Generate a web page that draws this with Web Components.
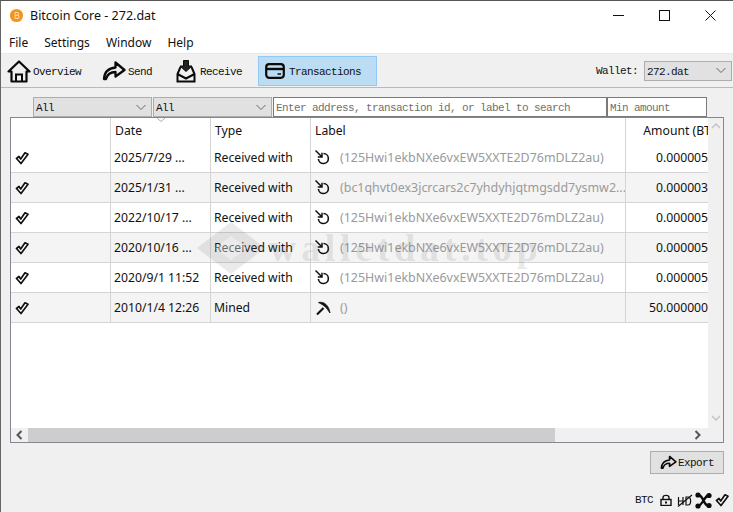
<!DOCTYPE html>
<html lang="en"><head><meta charset="utf-8"><title>Bitcoin Core - 272.dat</title>
<style>html,body{margin:0;padding:0;overflow:hidden;background:#f0f0f0}</style></head>
<body>
<app-window></app-window>
<script>
const ICONS={
 logo:[16,'<circle cx="8" cy="8" r="7" fill="#f7931a"/><path d="M6.5 4.5V11.5M6.5 4.8H9C10.6 4.8 10.6 7.8 9 7.8H6.5M6.5 7.9H9.4C11 7.9 11 11.1 9.4 11.1H6.5" fill="none" stroke="#fbd9a8" stroke-width="1.2"/>'],
 home:[24,'<path d="M1.5 12.5 12 2.5 22.5 12.5 19.5 12.5V22.5H4.5V12.5Z" fill="none" stroke="#0b0b0b" stroke-width="2.2" stroke-linejoin="round"/><path d="M9 22V15.5H15V22" fill="none" stroke="#0b0b0b" stroke-width="2"/>'],
 send:[24,'<path d="M2 20C2.5 12.5 7.5 9 13.5 8.5V3.5L22.5 11 13.5 17.5V13C9 13 5.5 14.5 4 20Z" fill="none" stroke="#0b0b0b" stroke-width="2.3" stroke-linejoin="round"/>'],
 recv:[24,'<path d="M9.5 1.5H14.5V7H18L12 12.5 6 7H9.5Z" fill="#222" stroke="#0b0b0b" stroke-width="1"/><path d="M6.5 8 3.5 15V22.5H20.5V15L17.5 8M3.5 15 12 19.5 20.5 15" fill="none" stroke="#0b0b0b" stroke-width="2"/>'],
 card:[20,'<rect x="1.2" y="3.2" width="17.6" height="13.6" rx="3" fill="none" stroke="#0b0b0b" stroke-width="2.2"/><path d="M1.5 8H18.5" stroke="#0b0b0b" stroke-width="2.4"/><path d="M12.5 13H16" stroke="#0b0b0b" stroke-width="1.5"/>'],
 check:[14,'<path d="M1.5 7.5 4 5.5 5.7 8 10 1.8 13 3.2 6 12.5Z" fill="#fff" stroke="#111" stroke-width="1.7" stroke-linejoin="round"/>'],
 tx:[16,'<path d="M.5 .5 7 7M2.8 7H7V2.8" fill="none" stroke="#111" stroke-width="1.5"/><path d="M8.5 3.5A5 5 0 1 1 3.4 9" fill="none" stroke="#111" stroke-width="1.6"/>'],
 pick:[16,'<path d="M2 14.5 8.5 8" stroke="#111" stroke-width="2.2"/><path d="M3.5 2.5C9 1 14 5.5 15 13L11.5 8 8 5Z" fill="#111" stroke="#111" stroke-width=".8"/>'],
 lock:[12,'<rect x="1" y="5.5" width="10" height="6" fill="none" stroke="#111" stroke-width="1.4"/><path d="M3 5.5V3.5C3 .7 9 .7 9 3.5V5.5" fill="none" stroke="#111" stroke-width="1.4"/><rect x="5" y="7.5" width="2" height="2" fill="#111"/>'],
 nohd:[16,'<path d="M1.5 5V13M6 5V13M1.5 9H6" stroke="#111" stroke-width="1.2" fill="none"/><path d="M9 5V13H11C14.5 13 14.5 5 11 5Z" stroke="#111" stroke-width="1.2" fill="none"/><path d="M1 14.5 15 3" stroke="#111" stroke-width="1.2"/>'],
 net:[17,'<path d="M3 3C9 3 8 14 14 14M3 14C8 13 9 4 14 3" fill="none" stroke="#0b0b0b" stroke-width="2.4"/><circle cx="3" cy="3" r="2.6" fill="#0b0b0b"/><circle cx="3" cy="14" r="2.6" fill="#0b0b0b"/><circle cx="14" cy="3.5" r="2.6" fill="#0b0b0b"/><circle cx="14" cy="13.5" r="2.6" fill="#0b0b0b"/>']
};
function def(name,css,html){
 customElements.define(name,class extends HTMLElement{
  constructor(){super();this.attachShadow({mode:'open'})}
  connectedCallback(){this.shadowRoot.innerHTML='<style>'+css+'</style>'+(typeof html==='function'?html(this):html)}
 });
}
const MONO='font:11px/14px "Liberation Mono",monospace;letter-spacing:-.6px;';
const CHEV='<svg style="flex:none" width="12" height="7" viewBox="0 0 12 7"><path d="M1.5 1 6 5.5 10.5 1" fill="none" stroke="#666" stroke-width="1"/></svg>';
def('ui-icon',':host{display:inline-flex;flex:none}svg{display:block}',h=>{
 const [v,body]=ICONS[h.getAttribute('name')];const s=h.getAttribute('size')||v;
 return `<svg width="${s}" height="${s}" viewBox="0 0 ${v} ${v}">${body}</svg>`});
def('title-bar',`:host{display:flex;align-items:center;height:29px;background:#fff;color:#111;font:12.5px "Noto Sans",sans-serif}
 .t{flex:1;padding-left:6px}ui-icon{margin-left:8px}
 .b{width:46px;height:29px;display:flex;align-items:center;justify-content:center}`,
 `<ui-icon name="logo" size="15"></ui-icon><div class="t">Bitcoin Core - 272.dat</div>
 <div class="b"><svg width="11" height="11"><path d="M0 5.5H11" stroke="#111"/></svg></div>
 <div class="b"><svg width="11" height="11"><rect x=".5" y=".5" width="10" height="10" fill="none" stroke="#111"/></svg></div>
 <div class="b"><svg width="11" height="11"><path d="M.5 .5 10.5 10.5M10.5 .5 .5 10.5" stroke="#111" fill="none"/></svg></div>`);
def('menu-bar',`:host{display:flex;height:23px;background:#fff;border-bottom:1px solid #e9e9e9;color:#111;font:12px/25px "Noto Sans",sans-serif;padding-left:8px;gap:16px}`,
 '<span>File</span><span>Settings</span><span>Window</span><span>Help</span>');
def('tool-button',`:host{display:flex;align-items:center;box-sizing:border-box;height:30px;gap:2px;color:#111;${MONO}}
 .x{display:block;padding-top:2px}
 :host([active]){background:#bcdcf4;border:1px solid #90c8f6;padding:1px 0 0 6px;gap:4px}`,
 h=>`<ui-icon name="${h.getAttribute('icon')}" size="${h.getAttribute('size')||24}"></ui-icon><span class="x"><slot></slot></span>`);
def('ui-combo',`:host{display:flex;align-items:center;box-sizing:border-box;height:20px;background:#e1e1e1;border:1px solid #adadad;padding:0 4px 0 2px;justify-content:space-between;color:#111;${MONO}}
 .x{display:block;padding-top:2px}`,
 '<span class="x"><slot></slot></span>'+CHEV);
def('ui-input',`:host{display:flex;align-items:center;box-sizing:border-box;height:20px;background:#fff;border:1px solid #7a7a7a;padding:2px 0 0 2px;color:#6f6f6f;white-space:nowrap;overflow:hidden;${MONO}}`,'<slot></slot>');
def('tool-bar',`:host{display:flex;align-items:center;height:33px;background:#f0f0f0;border-bottom:1px solid #b9b9b9;padding-left:6px;${MONO}}
 .w{margin-left:auto;display:flex;align-items:center;gap:6px;padding-right:1px;color:#111}
 tool-button:nth-of-type(1){width:95px}tool-button:nth-of-type(2){width:72px}tool-button:nth-of-type(3){width:84px}
 tool-button:nth-of-type(4){width:119px}
 ui-combo{width:88px}`,
 `<tool-button icon="home">Overview</tool-button><tool-button icon="send">Send</tool-button><tool-button icon="recv">Receive</tool-button>
 <tool-button icon="card" size="20" active>Transactions</tool-button>
 <div class="w">Wallet: <ui-combo>272.dat</ui-combo></div>`);
def('filter-bar',`:host{display:flex;padding:9px 0 0 32px;gap:1px}ui-combo{width:119px}`,
 `<ui-combo>All</ui-combo><ui-combo>All</ui-combo><ui-input style="width:334px;margin-right:-1px">Enter address, transaction id, or label to search</ui-input><ui-input style="width:100px">Min amount</ui-input>`);
const GRID='display:grid;grid-template-columns:100px 100px 100px 315px 100px;width:715px;';
def('tx-row',`:host{${GRID}height:30px;box-sizing:border-box;border-bottom:1px solid #d4d4d4;color:#111;font:12.2px/28px "Noto Sans",sans-serif}
 :host([alt]){background:#f4f4f4}
 .c{border-right:1px solid #d4d4d4;padding-left:3px;white-space:nowrap;overflow:hidden;display:flex;align-items:center}
 .s{padding-left:4px}.l{padding-left:4px;gap:9px;color:#9a9a9a;font-size:12.45px}
 .a{border:0;justify-content:flex-end;padding-right:4px}`,
 h=>{const g=a=>h.getAttribute(a);return `<div class="c s"><ui-icon name="check" size="14"></ui-icon></div><div class="c">${g('date')}</div><div class="c">${g('type')}</div><div class="c l"><ui-icon name="${g('icon')||'tx'}" size="16"></ui-icon><span>${g('label')}</span></div><div class="c a">${g('amt')}</div>`});
def('tx-table',`:host{display:block;flex:1;min-height:0;overflow:hidden;background:#fff}
 .h{${GRID}height:25px;color:#111;font:12.2px/25px "Noto Sans",sans-serif}
 .h div{border-right:1px solid #d4d4d4;padding-left:4px;position:relative}
 .h div:last-child{border:0;text-align:right;padding:0 4px 0 0}
 .h svg{position:absolute;left:45px;top:0}`,
 `<div class="h"><div></div><div>Date<svg width="10" height="4"><path d="M1 0 5 3.5 9 0" fill="none" stroke="#aaa"/></svg></div><div>Type</div><div>Label</div><div>Amount (BTC)</div></div><slot></slot>`);
def('v-scroll',`:host{display:flex;justify-content:center;width:15px;flex:none;background:#f0f0f0}
 .w{display:flex;flex-direction:column;justify-content:space-between;height:100%;padding:5px 0 7px;box-sizing:border-box}`,
 `<div class="w"><svg width="10" height="6"><path d="M1 5 5 1 9 5" fill="none" stroke="#c4c4c4" stroke-width="1.5"/></svg><svg width="10" height="6"><path d="M1 1 5 5 9 1" fill="none" stroke="#c4c4c4" stroke-width="1.5"/></svg></div>`);
def('h-scroll',`:host{display:flex;align-items:center;height:14px;background:#f0f0f0;flex:none}
 .a{width:17px;display:flex;justify-content:center}.t{width:527px;height:14px;background:#cdcdcd}.r{margin-left:auto;display:flex;padding-right:22px}`,
 `<div class="a"><svg width="7" height="10"><path d="M5.5 1 1.5 5 5.5 9" fill="none" stroke="#555" stroke-width="2"/></svg></div><div class="t"></div><div class="r"><svg width="7" height="10"><path d="M1.5 1 5.5 5 1.5 9" fill="none" stroke="#555" stroke-width="2"/></svg></div>`);
def('table-frame',`:host{display:flex;flex-direction:column;box-sizing:border-box;width:714px;height:326px;margin-left:9px;border:1px solid #828790;flex:none}
 .m{display:flex;flex:1;min-height:0}`,`<div class="m"><slot></slot></div><h-scroll></h-scroll>`);
def('export-bar',`:host{display:flex;justify-content:flex-end;padding:8px 9px 0 0}
 .b{display:flex;align-items:center;justify-content:center;gap:1px;box-sizing:border-box;width:74px;height:23px;background:#e1e1e1;border:1px solid #adadad;color:#111;${MONO}}`,
 `<div class="b"><ui-icon name="send" size="17"></ui-icon>Export</div>`);
def('status-bar',`:host{display:flex;align-items:center;justify-content:flex-end;padding:16px 4px 0 0;height:20px;color:#111;${MONO}}
 span{margin-right:7px}.n{margin:0 3px 0 2px}.h{margin-left:5px}`,
 `<span>BTC</span><ui-icon name="lock" size="12"></ui-icon><ui-icon class="h" name="nohd" size="16"></ui-icon><ui-icon class="n" name="net" size="17"></ui-icon><ui-icon name="check" size="14"></ui-icon>`);
def('water-mark',`:host{position:absolute;left:196px;top:221px;display:flex;align-items:center;gap:4px;pointer-events:none;color:rgba(90,90,90,.15);font:bold 38px/48px "Liberation Serif",serif;letter-spacing:4.7px;white-space:nowrap}
 svg{flex:none}`,
 `<svg width="68" height="52" viewBox="0 0 68 52"><path d="M34 0 68 26 34 52 0 26Z" fill="rgba(90,90,90,.13)"/><path d="M34 14 50 26 34 38 18 26Z" fill="rgba(255,255,255,.35)"/></svg><span>walletdat.top</span>`);
def('app-window',`:host{display:flex;flex-direction:column;position:relative;box-sizing:border-box;width:733px;height:512px;background:#f0f0f0;border-left:1px solid #666;border-top:1px solid #555;overflow:hidden}`,
 `<title-bar></title-bar><menu-bar></menu-bar><tool-bar></tool-bar><filter-bar></filter-bar>
 <table-frame>
  <tx-table>
   <tx-row date="2025/7/29 ..." type="Received with" label="(125Hwi1ekbNXe6vxEW5XXTE2D76mDLZ2au)" amt="0.00000546"></tx-row>
   <tx-row alt date="2025/1/31 ..." type="Received with" label="(bc1qhvt0ex3jcrcars2c7yhdyhjqtmgsdd7ysmw2..." amt="0.00000330"></tx-row>
   <tx-row date="2022/10/17 ..." type="Received with" label="(125Hwi1ekbNXe6vxEW5XXTE2D76mDLZ2au)" amt="0.00000546"></tx-row>
   <tx-row alt date="2020/10/16 ..." type="Received with" label="(125Hwi1ekbNXe6vxEW5XXTE2D76mDLZ2au)" amt="0.00000546"></tx-row>
   <tx-row date="2020/9/1 11:52" type="Received with" label="(125Hwi1ekbNXe6vxEW5XXTE2D76mDLZ2au)" amt="0.00000546"></tx-row>
   <tx-row alt date="2010/1/4 12:26" type="Mined" icon="pick" label="()" amt="50.00000000"></tx-row>
  </tx-table>
  <v-scroll></v-scroll>
 </table-frame>
 <export-bar></export-bar><status-bar></status-bar><water-mark></water-mark>`);
</script>
</body></html>
